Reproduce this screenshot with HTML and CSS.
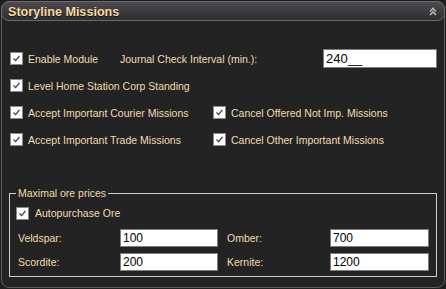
FILE: index.html
```html
<!DOCTYPE html>
<html lang="en">
<head>
    <meta charset="UTF-8">
    <meta name="viewport" content="width=device-width, initial-scale=1.0">
    <title>Storyline Missions</title>
    <link rel="stylesheet" href="styles.css">
</head>
<body>
    <div class="panel">
        <div class="panel-header">
            <span class="panel-title">Storyline Missions</span>
            <svg class="collapse" width="8" height="9" viewBox="0 0 8 9">
                <path d="M1 4.5 L4 1.5 L7 4.5" fill="none" stroke="#b8b8b8" stroke-width="1.6"/>
                <path d="M1 8 L4 5 L7 8" fill="none" stroke="#b8b8b8" stroke-width="1.6"/>
            </svg>
        </div>

        <div class="panel-body">
            <div class="row">
                <label class="check short"><span class="box"><svg viewBox="0 0 13 13"><path d="M3 6.5 L5.5 9 L10 3.5"/></svg></span>Enable Module</label>
                <span class="label interval-label">Journal Check Interval (min.):</span>
                <input type="text" class="field interval" value="240__">
            </div>
            <div class="row">
                <label class="check"><span class="box"><svg viewBox="0 0 13 13"><path d="M3 6.5 L5.5 9 L10 3.5"/></svg></span>Level Home Station Corp Standing</label>
            </div>
            <div class="row">
                <label class="check half"><span class="box"><svg viewBox="0 0 13 13"><path d="M3 6.5 L5.5 9 L10 3.5"/></svg></span>Accept Important Courier Missions</label>
                <label class="check"><span class="box"><svg viewBox="0 0 13 13"><path d="M3 6.5 L5.5 9 L10 3.5"/></svg></span>Cancel Offered Not Imp. Missions</label>
            </div>
            <div class="row">
                <label class="check half"><span class="box"><svg viewBox="0 0 13 13"><path d="M3 6.5 L5.5 9 L10 3.5"/></svg></span>Accept Important Trade Missions</label>
                <label class="check"><span class="box"><svg viewBox="0 0 13 13"><path d="M3 6.5 L5.5 9 L10 3.5"/></svg></span>Cancel Other Important Missions</label>
            </div>

            <fieldset class="group">
                <legend>Maximal ore prices</legend>
                <label class="check auto"><span class="box"><svg viewBox="0 0 13 13"><path d="M3 6.5 L5.5 9 L10 3.5"/></svg></span>Autopurchase Ore</label>
                <div class="ore-grid">
                    <span class="label">Veldspar:</span>
                    <input type="text" class="field" value="100">
                    <span class="label second">Omber:</span>
                    <input type="text" class="field" value="700">
                    <span class="label">Scordite:</span>
                    <input type="text" class="field" value="200">
                    <span class="label second">Kernite:</span>
                    <input type="text" class="field" value="1200">
                </div>
            </fieldset>
        </div>
    </div>
</body>
</html>
```

FILE: styles.css
```css
/* Dark docked panel */
body {
    margin: 0;
    background-color: #1e1e1e;
    font-family: "Liberation Sans", Arial, sans-serif;
    font-size: 10.5px;
    color: #f2dcb0;
}

.panel {
    margin: 1px;
    width: 444px;
    height: 287px;
    box-sizing: border-box;
    border: 1px solid #5e5e5e;
    border-radius: 8px;
    background-color: #232323;
}

.panel-header {
    display: flex;
    align-items: center;
    justify-content: space-between;
    height: 20px;
    margin: -1px -1px 0 -1px;
    padding: 0 7px 0 6px;
    box-sizing: border-box;
    border: 1px solid #6c6c6c;
    border-radius: 8px;
    background: linear-gradient(#4d4b4f, #2e2d30);
}

.panel-title {
    font-weight: bold;
    font-size: 12.6px;
    color: #f5d9a0;
    text-shadow: 0 1px 0 #111;
    padding-top: 1px;
}

.collapse {
    display: block;
}

.panel-body {
    padding: 24px 7px 0 7px;
}

.row {
    display: flex;
    align-items: center;
    height: 27px;
    padding-left: 1px;
}

.check {
    display: flex;
    align-items: center;
    white-space: nowrap;
}

.check.short {
    width: 110px;
}

.check.half {
    width: 203px;
}

.box {
    width: 13px;
    height: 13px;
    margin-right: 5px;
    box-sizing: border-box;
    border: 1px solid #8a8a8a;
    background-color: #fff;
}

.box svg {
    display: block;
    width: 11px;
    height: 11px;
}

.box path {
    fill: none;
    stroke: #3c3c3c;
    stroke-width: 1.5;
}

.label {
    white-space: nowrap;
}

.interval-label {
    width: 203px;
}

.field {
    width: 98px;
    height: 18px;
    box-sizing: border-box;
    margin: 0;
    padding: 0 2px;
    border: 1px solid #7d7d7d;
    background-color: #fff;
    color: #000;
    font-family: "Liberation Sans", Arial, sans-serif;
    font-size: 12px;
}

.interval {
    width: 114px;
    height: 19px;
    font-size: 13px;
}

.group {
    margin: 34px 0 0 0;
    padding: 4px 6px 5px 6px;
    border: 1px solid #cfcfcf;
}

.group legend {
    padding: 0 2px;
    margin-left: 0;
}

.check.auto {
    height: 20px;
    margin-bottom: 6px;
}

.auto .box {
    margin-right: 6px;
}

.ore-grid {
    display: grid;
    grid-template-columns: 102px 98px 112px 99px;
    row-gap: 6px;
    align-items: center;
    padding-left: 2px;
}

.ore-grid .second {
    padding-left: 9px;
}

.ore-grid .field:last-child,
.ore-grid .field:nth-child(4) {
    width: 99px;
}
```
